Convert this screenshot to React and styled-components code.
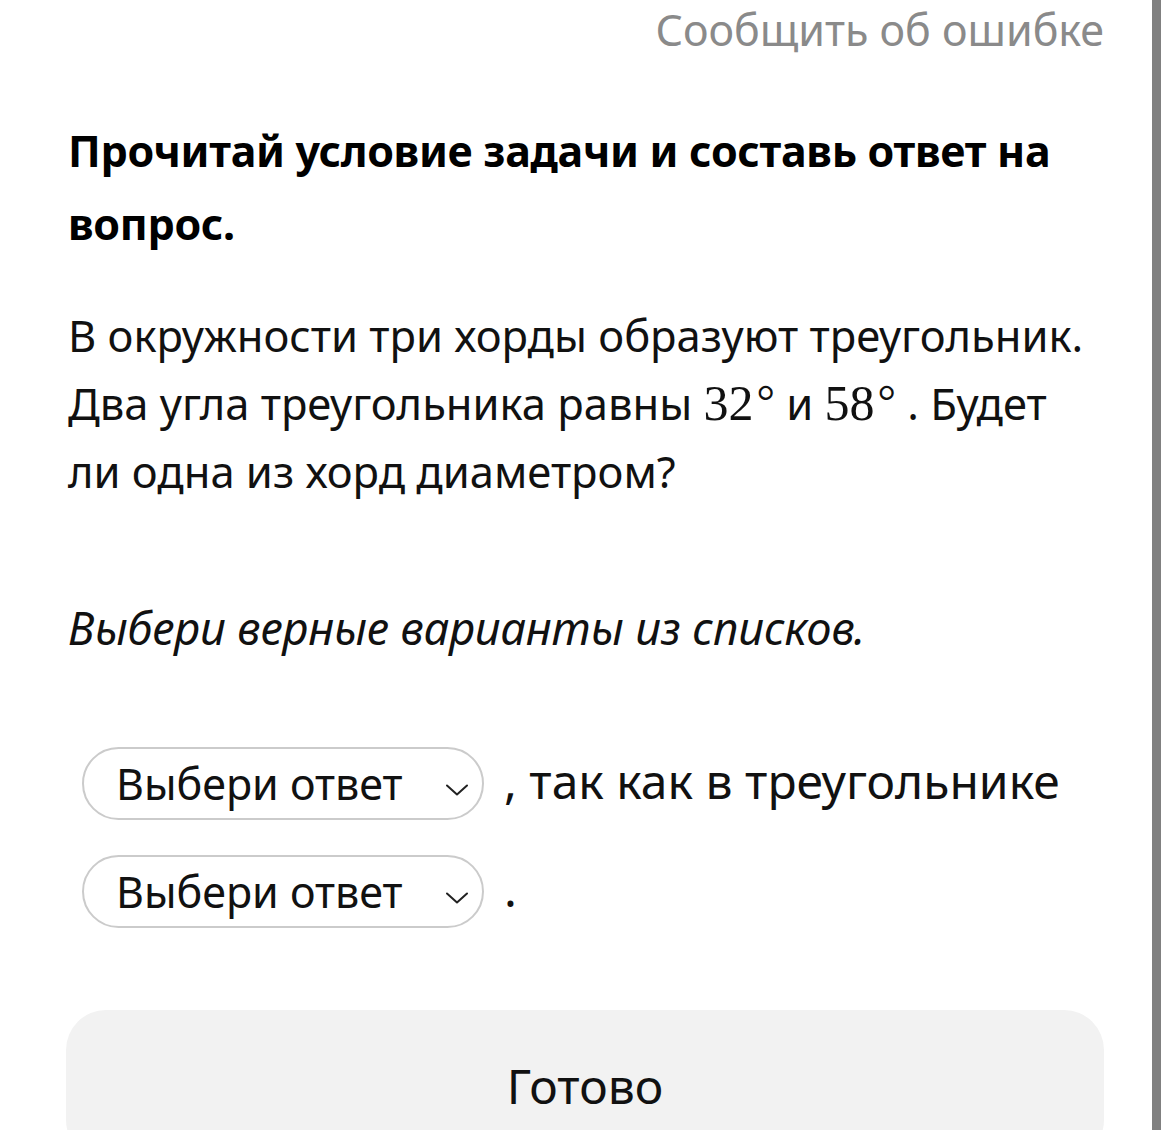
import React from "react";
import styled, { createGlobalStyle } from "styled-components";

const Global = createGlobalStyle`
  html, body { margin: 0; padding: 0; background: #ffffff; overflow: hidden; }
  body { font-family: "Noto Sans", "Open Sans", sans-serif; color: #111111; }
`;

const Frame = styled.div`
  display: flex;
  width: 1170px;
  height: 1130px;
  overflow: hidden;
`;

const Main = styled.main`
  flex: 1;
  padding: 0 48px 0 68px;
  display: flex;
  flex-direction: column;
`;

const Gutter = styled.div`
  width: 9px;
  margin-right: 9px;
  background: #808080;
`;

const TopBar = styled.div`
  display: flex;
  justify-content: flex-end;
  height: 64px;
  align-items: center;
`;

const ReportLink = styled.a`
  font-size: 43px;
  color: #8a8a8a;
  text-decoration: none;
`;

const Title = styled.h1`
  margin: 55px 0 0;
  font-size: 43px;
  font-weight: 700;
  line-height: 73px;
  letter-spacing: -0.3px;
  color: #000;
`;

const Body = styled.p`
  margin: 41px 0 0;
  padding-right: 10px;
  font-size: 43.5px;
  line-height: 68px;
  color: #111;
`;

const MathNum = styled.span`
  font-family: "Liberation Serif", "Times New Roman", serif;
  font-size: 50px;
  line-height: 40px;
  white-space: nowrap;
`;

const Degree = styled.span`
  font-size: 46px;
  vertical-align: 3px;
  margin-left: 3px;
`;

const Hint = styled.p`
  margin: 89px 0 0;
  font-size: 45.3px;
  line-height: 68px;
  font-style: italic;
  letter-spacing: -0.2px;
  color: #111;
`;

const Answers = styled.div`
  margin: 85px 0 0 14px;
  display: flex;
  flex-direction: column;
  gap: 35px;
`;

const AnswerRow = styled.div`
  display: flex;
  align-items: center;
  font-size: 48px;
  color: #111;
`;

const Select = styled.button`
  box-sizing: border-box;
  flex-shrink: 0;
  width: 402px;
  height: 73px;
  border: 2px solid #cbcbcb;
  border-radius: 37px;
  background: #fff;
  display: flex;
  align-items: center;
  padding: 0 14px 0 32px;
  font-family: inherit;
  font-size: 43px;
  color: #111;
  margin-right: 20px;
  cursor: pointer;
`;

const SelectLabel = styled.span`
  flex: 1;
  text-align: left;
  line-height: 1;
  white-space: nowrap;
`;

const Chevron = styled.svg`
  width: 22px;
  height: 12px;
  margin-top: 12px;
`;

const Tail = styled.span`
  white-space: nowrap;
  margin-top: -6px;
`;

const Done = styled.button`
  margin-top: 82px;
  margin-left: -2px;
  height: 150px;
  border: none;
  border-radius: 40px;
  background: #f2f2f2;
  font-family: inherit;
  font-size: 48px;
  color: #111;
  flex-shrink: 0;
`;

const Dropdown = () => (
  <Select type="button">
    <SelectLabel>Выбери ответ</SelectLabel>
    <Chevron viewBox="0 0 22 12" fill="none">
      <path d="M1 1.5 L11 10.5 L21 1.5" stroke="#222" strokeWidth="2" strokeLinecap="round" strokeLinejoin="round" />
    </Chevron>
  </Select>
);

export default function App() {
  return (
    <Frame>
      <Global />
      <Main>
        <TopBar>
          <ReportLink href="#">Сообщить об ошибке</ReportLink>
        </TopBar>
        <Title>Прочитай условие задачи и составь ответ на вопрос.</Title>
        <Body>
          В окружности три хорды образуют треугольник. Два угла треугольника равны{" "}
          <MathNum>32<Degree>°</Degree></MathNum>{" "}и{" "}
          <MathNum>58<Degree>°</Degree></MathNum>{" "}. Будет ли одна из хорд диаметром?
        </Body>
        <Hint>Выбери верные варианты из списков.</Hint>
        <Answers>
          <AnswerRow>
            <Dropdown />
            <Tail>, так как в треугольнике</Tail>
          </AnswerRow>
          <AnswerRow>
            <Dropdown />
            <Tail>.</Tail>
          </AnswerRow>
        </Answers>
        <Done type="button">Готово</Done>
      </Main>
      <Gutter />
    </Frame>
  );
}
